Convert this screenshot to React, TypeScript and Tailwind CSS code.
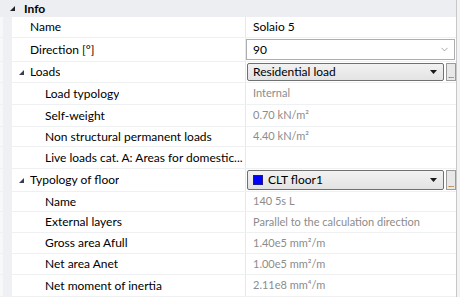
import { ChevronDown } from 'lucide-react';

type Row = {
  label: string;
  value?: string;
  indent?: boolean;
  group?: boolean;
  h: string;
  kind?: 'text' | 'muted' | 'input' | 'combo' | 'swatch';
};

const rows: Row[] = [
  { label: 'Name', value: 'Solaio 5', h: 'h-[21px]', kind: 'text' },
  { label: 'Direction [°]', value: '90', h: 'h-[24px]', kind: 'input' },
  { label: 'Loads', value: 'Residential load', h: 'h-[21px]', group: true, kind: 'combo' },
  { label: 'Load typology', value: 'Internal', h: 'h-[22px]', indent: true, kind: 'muted' },
  { label: 'Self-weight', value: '0.70 kN/m²', h: 'h-[22px]', indent: true, kind: 'muted' },
  { label: 'Non structural permanent loads', value: '4.40 kN/m²', h: 'h-[20px]', indent: true, kind: 'muted' },
  { label: 'Live loads cat. A: Areas for domestic...', value: '', h: 'h-[22px]', indent: true, kind: 'muted' },
  { label: 'Typology of floor', value: 'CLT floor1', h: 'h-[23px]', group: true, kind: 'swatch' },
  { label: 'Name', value: '140 5s L', h: 'h-[20px]', indent: true, kind: 'muted' },
  { label: 'External layers', value: 'Parallel to the calculation direction', h: 'h-[21px]', indent: true, kind: 'muted' },
  { label: 'Gross area Afull', value: '1.40e5 mm²/m', h: 'h-[21px]', indent: true, kind: 'muted' },
  { label: 'Net area Anet', value: '1.00e5 mm²/m', h: 'h-[21px]', indent: true, kind: 'muted' },
  { label: 'Net moment of inertia', value: '2.11e8 mm⁴/m', h: 'h-[22px]', indent: true, kind: 'muted' },
];

function Expander({ color }: { color: string }) {
  return (
    <svg width="5" height="5" viewBox="0 0 5 5" className="shrink-0">
      <polygon points="5,0 5,5 0,5" fill={color} />
    </svg>
  );
}

function ComboBox({ children }: { children: React.ReactNode }) {
  return (
    <div className="flex h-full items-center gap-[2px] py-[1px] pl-px pr-0">
      <div className="flex h-full flex-1 items-center rounded-[2px] border border-[#707070] bg-gradient-to-b from-[#f2f2f2] to-[#e3e3e3] pl-[5px] pr-[6px]">
        <div className="flex flex-1 items-center gap-[5px] text-[12px] text-black">{children}</div>
        <svg width="7" height="4" viewBox="0 0 7 4">
          <polygon points="0,0 7,0 3.5,4" fill="#1a1a1a" />
        </svg>
      </div>
      <div className="flex h-full w-[10px] items-end justify-center border border-[#9a9a9a] bg-[#e8e8e8] pb-[1px] text-[8px] leading-none text-[#333]">
        ...
      </div>
    </div>
  );
}

function Value({ row }: { row: Row }) {
  if (row.kind === 'input') {
    return (
      <div className="flex h-full items-center py-px pr-px">
        <div className="flex h-full flex-1 items-center border border-[#abadb3] bg-white pl-[6px] pr-[4px]">
          <span className="flex-1 text-[12px] text-black">{row.value}</span>
          <ChevronDown className="h-[11px] w-[11px] text-[#808080]" strokeWidth={1.5} />
        </div>
      </div>
    );
  }
  if (row.kind === 'combo') {
    return <ComboBox>{row.value}</ComboBox>;
  }
  if (row.kind === 'swatch') {
    return (
      <ComboBox>
        <span className="h-[10px] w-[10px] border border-[#1a1a8a] bg-[#0000ff]" />
        {row.value}
      </ComboBox>
    );
  }
  return (
    <div
      className={
        row.kind === 'text'
          ? 'flex h-full items-center pl-[7px] text-[12px] text-black'
          : 'flex h-full items-center pl-[7px] text-[11px] text-[#8c8c8c]'
      }
    >
      {row.value}
    </div>
  );
}

export default function App() {
  return (
    <div className="flex h-[297px] w-[460px] overflow-hidden bg-[#f3f3f3] font-['Segoe_UI','Lato','Liberation_Sans',sans-serif]">
      <div className="flex w-[457px] flex-col border-r border-[#c8c8c8] bg-white">
        {/* Category header */}
        <div className="flex h-[17px] shrink-0 items-center gap-[9px] bg-[#eceef1] pl-[10px]">
          <Expander color="#222" />
          <span className="text-[12px] font-bold text-black">Info</span>
        </div>

        {rows.map((row, i) => (
          <div key={i} className={`flex ${row.h} shrink-0 border-b border-[#eef0f2]`}>
            <div className="w-[12px] shrink-0 border-l-[3px] border-[#f7f8fa] bg-[#eef0f3]" />
            <div
              className={`flex w-[234px] shrink-0 items-center border-r border-[#e6e8eb] text-[12px] text-black ${
                row.group ? 'gap-[6px] pl-[7px]' : row.indent ? 'pl-[33px]' : 'pl-[18px]'
              }`}
            >
              {row.group && <Expander color="#3c3c50" />}
              <span className="truncate">{row.label}</span>
            </div>
            <div className="flex-1">
              <Value row={row} />
            </div>
          </div>
        ))}
      </div>
    </div>
  );
}
